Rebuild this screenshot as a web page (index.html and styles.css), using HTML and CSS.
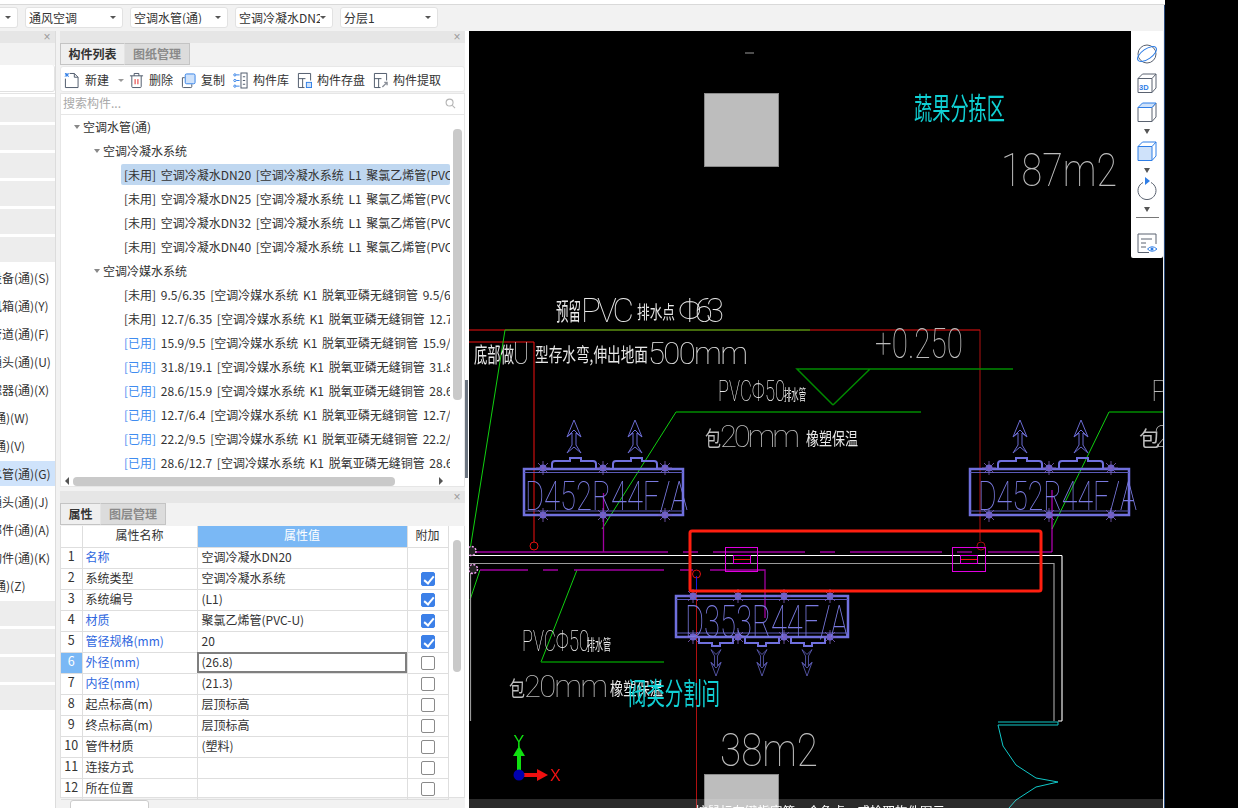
FILE: index.html
```html
<!DOCTYPE html>
<html lang="zh">
<head>
<meta charset="utf-8">
<title>构件列表</title>
<link rel="stylesheet" href="styles.css">
</head>
<body>
<div class="topline"></div>
<div class="app">
  <header class="combo-bar">
    <div class="combo combo-first"><span class="caret"></span></div>
    <div class="combo"><span class="combo-text">通风空调</span><span class="caret"></span></div>
    <div class="combo"><span class="combo-text">空调水管(通)</span><span class="caret"></span></div>
    <div class="combo"><span class="combo-text">空调冷凝水DN20</span><span class="caret"></span></div>
    <div class="combo"><span class="combo-text">分层1</span><span class="caret"></span></div>
  </header>
  <main class="work">
    <aside class="rail">
      <div class="panel-head"><span class="close">×</span></div>
      <div class="rail-blank"></div>
      <div class="rail-box"></div>
      <div class="rail-list">
        <div class="rail-row"></div><div class="rail-row"></div><div class="rail-row"></div><div class="rail-row"></div><div class="rail-row"></div><div class="rail-row"></div>
        <div class="rail-row rail-text"><span>通风设备(通)(S)</span></div>
        <div class="rail-row rail-text"><span>静压风箱(通)(Y)</span></div>
        <div class="rail-row rail-text"><span>通风管道(通)(F)</span></div>
        <div class="rail-row rail-text"><span>风管通头(通)(U)</span></div>
        <div class="rail-row rail-text"><span>水过滤器(通)(X)</span></div>
        <div class="rail-row rail-text"><span>风管(通)(W)</span></div>
        <div class="rail-row rail-text"><span>风口(通)(V)</span></div>
        <div class="rail-row rail-text rail-on"><span>空调水管(通)(G)</span></div>
        <div class="rail-row rail-text"><span>水管通头(通)(J)</span></div>
        <div class="rail-row rail-text"><span>水管部件(通)(A)</span></div>
        <div class="rail-row rail-text"><span>零星构件(通)(K)</span></div>
        <div class="rail-row rail-text"><span>土建(通)(Z)</span></div>
        <div class="rail-row"></div><div class="rail-row"></div><div class="rail-row"></div><div class="rail-row"></div>
      </div>
    </aside>
    <section class="middle">
      <div class="panel panel-list">
        <div class="panel-head"><span class="close">×</span></div>
        <div class="tabs">
          <div class="tab tab-on">构件列表</div>
          <div class="tab">图纸管理</div>
        </div>
        <div class="tools">
          <div class="tool tool-new">
            <svg class="ico" viewBox="0 0 16 18"><path class="ln" d="M1.5 7V16.5H15V5.5L11 1.5H6"/><path class="ln" d="M11 1.5V5.5H15"/><path class="bl" d="M1 1l4 4M5 1L1 5M3 1v4M1 3h4"/></svg>
            <span>新建</span><i class="mini"></i>
          </div>
          <div class="tool tool-del">
            <svg class="ico" viewBox="0 0 16 18"><path class="ln" d="M1 4H15M5.5 4V1.5H10.500V4M3 4V15.500Q3 16.500 4 16.500H12Q13 16.500 13 15.500V4"/><path class="rd" d="M6.500 7.500V13M9.500 7.500V13"/></svg>
            <span>删除</span>
          </div>
          <div class="tool tool-copy">
            <svg class="ico" viewBox="0 0 16 18"><path class="ln" d="M4 6H1.500V15.500Q1.500 16.500 2.500 16.500H10.500Q11.500 16.500 11.500 15.500V13"/><rect class="bf" x="4.500" y="2" width="10.500" height="10.500" rx="1.500"/></svg>
            <span>复制</span>
          </div>
          <div class="tool tool-lib">
            <svg class="ico" viewBox="0 0 16 18"><circle class="bl" cx="2" cy="3" r="1.200"/><circle class="bl" cx="2" cy="9" r="1.200"/><circle class="bl" cx="2" cy="15" r="1.200"/><path class="bl" d="M3.500 3H7M3.500 9H7M3.500 15H7"/><rect class="ln" x="8.500" y="1" width="6.500" height="16"/><path class="ln" d="M10.500 5H13M10.500 9H13M10.500 13H13"/></svg>
            <span>构件库</span>
          </div>
          <div class="tool tool-save">
            <svg class="ico" viewBox="0 0 16 18"><path class="ln" d="M8 16.500H1.500V1.500H14.500V9M1.500 7H9M6 7V16.500"/><rect class="bf" x="10" y="11" width="5.500" height="5.500"/></svg>
            <span>构件存盘</span>
          </div>
          <div class="tool tool-get">
            <svg class="ico" viewBox="0 0 16 18"><path class="ln" d="M8 16.500H1.500V1.500H14.500V9M1.500 7H9M6 7V16.500"/><path class="gy" d="M10 16l5-5M12 11h3v3"/></svg>
            <span>构件提取</span>
          </div>
        </div>
        <div class="search">
          <span>搜索构件...</span>
          <svg class="lens" viewBox="0 0 12 12"><circle cx="5" cy="5" r="3.800"/><path d="M8 8l3 3"/></svg>
        </div>
        <div class="tree">
          <div class="tree-body">
            <div class="node l1"><i class="fold"></i>空调水管(通)</div>
            <div class="node l2"><i class="fold"></i>空调冷凝水系统</div>
            <div class="node l3 node-on"><span class="leaf"><b>[未用]</b> 空调冷凝水DN20 [空调冷凝水系统 L1 聚氯乙烯管(PVC-U) 20]</span></div>
            <div class="node l3"><span class="leaf"><b>[未用]</b> 空调冷凝水DN25 [空调冷凝水系统 L1 聚氯乙烯管(PVC-U) 25]</span></div>
            <div class="node l3"><span class="leaf"><b>[未用]</b> 空调冷凝水DN32 [空调冷凝水系统 L1 聚氯乙烯管(PVC-U) 32]</span></div>
            <div class="node l3"><span class="leaf"><b>[未用]</b> 空调冷凝水DN40 [空调冷凝水系统 L1 聚氯乙烯管(PVC-U) 40]</span></div>
            <div class="node l2"><i class="fold"></i>空调冷媒水系统</div>
            <div class="node l3"><span class="leaf"><b>[未用]</b> 9.5/6.35 [空调冷媒水系统 K1 脱氧亚磷无缝铜管 9.5/6.35]</span></div>
            <div class="node l3"><span class="leaf"><b>[未用]</b> 12.7/6.35 [空调冷媒水系统 K1 脱氧亚磷无缝铜管 12.7/6.35]</span></div>
            <div class="node l3"><span class="leaf"><b class="used">[已用]</b> 15.9/9.5 [空调冷媒水系统 K1 脱氧亚磷无缝铜管 15.9/9.5]</span></div>
            <div class="node l3"><span class="leaf"><b class="used">[已用]</b> 31.8/19.1 [空调冷媒水系统 K1 脱氧亚磷无缝铜管 31.8/19.1]</span></div>
            <div class="node l3"><span class="leaf"><b class="used">[已用]</b> 28.6/15.9 [空调冷媒水系统 K1 脱氧亚磷无缝铜管 28.6/15.9]</span></div>
            <div class="node l3"><span class="leaf"><b class="used">[已用]</b> 12.7/6.4 [空调冷媒水系统 K1 脱氧亚磷无缝铜管 12.7/6.4]</span></div>
            <div class="node l3"><span class="leaf"><b class="used">[已用]</b> 22.2/9.5 [空调冷媒水系统 K1 脱氧亚磷无缝铜管 22.2/9.5]</span></div>
            <div class="node l3"><span class="leaf"><b class="used">[已用]</b> 28.6/12.7 [空调冷媒水系统 K1 脱氧亚磷无缝铜管 28.6/12.7]</span></div>
            <div class="vthumb"></div>
          </div>
          <div class="hscroll"><i class="arr arr-l"></i><div class="hthumb"></div><i class="arr arr-r"></i></div>
        </div>
      </div>
      <div class="panel panel-props">
        <div class="panel-head"><span class="close">×</span></div>
        <div class="tabs">
          <div class="tab tab-on tab-short">属性</div>
          <div class="tab">图层管理</div>
        </div>
        <div class="props">
          <table class="grid">
            <colgroup><col class="c-n"><col class="c-name"><col class="c-val"><col class="c-add"></colgroup>
            <thead><tr><th></th><th>属性名称</th><th class="hot">属性值</th><th>附加</th></tr></thead>
            <tbody>
              <tr><td class="n">1</td><td class="lnk">名称</td><td class="val">空调冷凝水DN20</td><td></td></tr>
              <tr><td class="n">2</td><td>系统类型</td><td class="val">空调冷凝水系统</td><td class="box"><span class="chk chk-on"></span></td></tr>
              <tr><td class="n">3</td><td>系统编号</td><td class="val">(L1)</td><td class="box"><span class="chk chk-on"></span></td></tr>
              <tr><td class="n">4</td><td class="lnk">材质</td><td class="val">聚氯乙烯管(PVC-U)</td><td class="box"><span class="chk chk-on"></span></td></tr>
              <tr><td class="n">5</td><td class="lnk">管径规格(mm)</td><td class="val">20</td><td class="box"><span class="chk chk-on"></span></td></tr>
              <tr><td class="n hot">6</td><td class="lnk">外径(mm)</td><td class="val edit">(26.8)</td><td class="box"><span class="chk"></span></td></tr>
              <tr><td class="n">7</td><td class="lnk">内径(mm)</td><td class="val">(21.3)</td><td class="box"><span class="chk"></span></td></tr>
              <tr><td class="n">8</td><td>起点标高(m)</td><td class="val">层顶标高</td><td class="box"><span class="chk"></span></td></tr>
              <tr><td class="n">9</td><td>终点标高(m)</td><td class="val">层顶标高</td><td class="box"><span class="chk"></span></td></tr>
              <tr><td class="n">10</td><td>管件材质</td><td class="val">(塑料)</td><td class="box"><span class="chk"></span></td></tr>
              <tr><td class="n">11</td><td>连接方式</td><td class="val"></td><td class="box"><span class="chk"></span></td></tr>
              <tr><td class="n">12</td><td>所在位置</td><td class="val"></td><td class="box"><span class="chk"></span></td></tr>
            </tbody>
          </table>
          <div class="props-scroll"><div class="pthumb"></div></div>
        </div>
        <div class="foot"><button class="foot-btn">显示属性</button></div>
      </div>
    </section>
    <div class="splitter"><div class="split-grip"></div></div>
    <section class="canvas">
      <svg class="cad" viewBox="469 31 694 777" width="694" height="777">
        <defs>
          <g id="spider">
            <circle class="sp-in" r="3.500"/>
            <path class="sp-ln" d="M-7 0H7M0-7V7M-5-5L5 5M-5 5L5-5"/>
          </g>
          <g id="up">
            <path class="unit-ln" d="M0 0L7 17L2 13V25L7 33L0 27L-7 33L-2 25V13L-7 17Z"/>
            <path class="unit-ln" d="M-7 17L0 10L7 17"/>
          </g>
          <path id="fan" class="unit-fan" d="M0 8V3Q0 0 3 0H18V-3H29V0H41Q44 0 44 3V8"/>
          <path id="fan3" class="unit-fan" d="M0 0V5H13V8H21V5H34V0"/>
          <g id="ac">
            <rect class="unit-box" x="0" y="0" width="159" height="46"/>
            <path class="unit-thin" d="M0 3.500H159M0 42H159"/>
            <use href="#fan" x="28" y="-8"/><use href="#fan" x="89" y="-8"/>
            <use href="#spider" x="19" y="-1"/><use href="#spider" x="79" y="-1"/><use href="#spider" x="141" y="-1"/>
            <use href="#spider" x="19" y="46"/><use href="#spider" x="79" y="46"/><use href="#spider" x="141" y="46"/>
            <use href="#up" x="50" y="-49"/><use href="#up" x="111" y="-49"/>
          </g>
        </defs>

        <rect class="block" x="704.500" y="93.500" width="74" height="73"/>
        <rect class="block" x="704.500" y="774.500" width="74" height="40"/>
        <path class="wgray" d="M745 53H754"/>

        <path class="red" d="M469 330H980M469 342H534M534 342V542"/>
        <path class="dred" d="M980 330V541M696.500 580V808"/>
        <circle class="red-c" cx="534" cy="546" r="4"/>
        <circle class="dred-c" cx="981" cy="546" r="4"/>
        <circle class="red-c" cx="696.500" cy="574" r="4"/>
        <path class="blue" d="M696.500 576V590"/>

        <path class="grn" d="M810 330H505L470 550M480 570L470 600M676 412L602 529M1109 412L1052 529M577 570L541 662"/>
        <path class="dgrn" d="M833 405L797 369H1013M833 405L870 369M676 412H921M1109 412H1163M541 662H664"/>

        <path class="pur" d="M475 552H668M683 552H698M713 552H805M820 552H835M850 552H942M480 570H528M543 570H558M574 570H664M680 570H693M710 570H765V618M603.500 493V552"/>
        <path class="magenta" d="M957 552H972M988 552H1052V490"/>
        <path class="wht" d="M469 555.500H1062V721H1058"/>
        <path class="gry" d="M469 563.500H1054V721M470.500 572V721M1062 556V720"/>
        <rect class="magenta" x="725.500" y="547.500" width="32" height="24"/>
        <rect class="magenta" x="733.500" y="555.500" width="17" height="8"/>
        <path class="red" d="M734 559.500H750"/>
        <rect class="magenta" x="952.500" y="547.500" width="33" height="24"/>
        <rect class="magenta" x="960.500" y="555.500" width="17" height="8"/>
        <path class="red" d="M961 559.500H977"/>

        <circle class="joint" cx="471.500" cy="551" r="4.500"/>
        <circle class="joint" cx="473" cy="569" r="4.500"/>

        <use href="#ac" x="524" y="469"/>
        <use href="#ac" x="970" y="469"/>

        <rect class="unit-box" x="676" y="596" width="172" height="41"/>
        <path class="unit-thin" d="M676 599.500H848M676 633H848"/>
        <use href="#fan3" x="699" y="638"/><use href="#fan3" x="745" y="638"/><use href="#fan3" x="791" y="638"/>
        <use href="#spider" x="693" y="596"/><use href="#spider" x="738" y="596"/><use href="#spider" x="784" y="596"/><use href="#spider" x="830" y="596"/>
        <use href="#spider" x="693" y="637"/><use href="#spider" x="738" y="637"/><use href="#spider" x="784" y="637"/><use href="#spider" x="830" y="637"/>
        <use href="#up" transform="translate(716 676) scale(.72 -.8)"/>
        <use href="#up" transform="translate(762 676) scale(.72 -.8)"/>
        <use href="#up" transform="translate(807 676) scale(.72 -.8)"/>

        <text class="t-cn cyan" x="914" y="119" font-size="30" textLength="91" lengthAdjust="spacingAndGlyphs">蔬果分拣区</text>
        <text class="t-la dim" x="1001" y="186" font-size="47" textLength="116" lengthAdjust="spacingAndGlyphs">187m2</text>

        <text class="t-cn white" x="556" y="320" font-size="24" textLength="25" lengthAdjust="spacingAndGlyphs">预留</text>
        <text class="t-la white" x="581" y="322" font-size="33" textLength="53" lengthAdjust="spacing">PVC</text>
        <text class="t-cn white" x="637" y="319" font-size="18" textLength="38" lengthAdjust="spacingAndGlyphs">排水点</text>
        <text class="t-la white" x="678" y="322" font-size="33" textLength="46" lengthAdjust="spacing">Φ63</text>

        <text class="t-cn white" x="474" y="362" font-size="21" textLength="40" lengthAdjust="spacingAndGlyphs">底部做</text>
        <text class="t-la white" x="513" y="364" font-size="31" textLength="16" lengthAdjust="spacingAndGlyphs">U</text>
        <text class="t-cn white" x="535" y="362" font-size="19" textLength="113" lengthAdjust="spacingAndGlyphs">型存水弯,伸出地面</text>
        <text class="t-la white" x="648" y="364" font-size="31" textLength="100" lengthAdjust="spacing">500mm</text>

        <text class="t-la white" x="718" y="401" font-size="29" textLength="67" lengthAdjust="spacingAndGlyphs">PVCΦ50</text>
        <text class="t-cn white" x="784" y="400" font-size="15" textLength="22" lengthAdjust="spacingAndGlyphs">排水管</text>
        <text class="t-cn dim" x="705" y="446" font-size="21" textLength="16" lengthAdjust="spacingAndGlyphs">包</text>
        <text class="t-la dim" x="720" y="447" font-size="31" textLength="80" lengthAdjust="spacing">20mm</text>
        <text class="t-cn white" x="806" y="445" font-size="17" textLength="52" lengthAdjust="spacingAndGlyphs">橡塑保温</text>

        <text class="t-la dim" x="875" y="358" font-size="43" textLength="88" lengthAdjust="spacingAndGlyphs">+0.250</text>

        <text class="t-la dim" x="1151" y="401" font-size="29">P</text>
        <text class="t-cn dim" x="1139" y="446" font-size="21">包</text>
        <text class="t-la dim" x="1154" y="447" font-size="31">2</text>

        <text class="t-la unit-t" x="525" y="510" font-size="41" textLength="163" lengthAdjust="spacingAndGlyphs">D452R44F/A</text>
        <text class="t-la unit-t" x="978" y="510" font-size="41" textLength="159" lengthAdjust="spacingAndGlyphs">D452R44F/A</text>
        <text class="t-la unit-t" x="685" y="637" font-size="44" textLength="163" lengthAdjust="spacingAndGlyphs">D353R44F/A</text>

        <text class="t-la white" x="522" y="651" font-size="29" textLength="67" lengthAdjust="spacingAndGlyphs">PVCΦ50</text>
        <text class="t-cn white" x="587" y="650" font-size="15" textLength="24" lengthAdjust="spacingAndGlyphs">排水管</text>
        <text class="t-cn dim" x="509" y="696" font-size="21" textLength="16" lengthAdjust="spacingAndGlyphs">包</text>
        <text class="t-la dim" x="524" y="697" font-size="31" textLength="84" lengthAdjust="spacing">20mm</text>
        <text class="t-cn white" x="610" y="695" font-size="17" textLength="53" lengthAdjust="spacingAndGlyphs">橡塑保温</text>
        <text class="t-cn cyan" x="628" y="704" font-size="30" textLength="92" lengthAdjust="spacingAndGlyphs">阀类分割间</text>
        <text class="t-la dim" x="720" y="766" font-size="47" textLength="98" lengthAdjust="spacingAndGlyphs">38m2</text>

        <path class="cy" d="M1058 725H998L1003 746L1016 765L1036 778L1058 782L1036 787L1016 800L1009 808"/>
        <path class="cy" d="M998 722H1058V725"/>

        <rect class="hilite" x="690" y="531" width="351" height="60" rx="2"/>

        <path class="ax-g" d="M519 775V752"/>
        <path class="ax-gf" d="M519 746L525 756H513Z"/>
        <text class="axis-g" x="513.500" y="747" font-size="16">Y</text>
        <path class="ax-r" d="M519 775H540"/>
        <path class="ax-rf" d="M548 775L537 769V781Z"/>
        <text class="axis-r" x="550" y="781" font-size="16">X</text>
        <circle class="ax-o" cx="519" cy="775" r="5.500"/>
      </svg>
      <div class="status"><span>按鼠标左键指定第一个角点，或拾取构件图元</span></div>
      <nav class="view-bar">
        <svg class="vb" viewBox="0 0 22 22"><circle class="vg" cx="11" cy="11" r="9"/><ellipse class="vb-l" cx="11" cy="11" rx="11" ry="5" transform="rotate(-35 11 11)"/></svg>
        <svg class="vb vb-gap" viewBox="0 0 22 22"><path class="vg" d="M2 6.500L6.500 2H20V16L16 20.500H2ZM2 6.500H16V20.500M16 6.500L20 2"/><text class="v3d" x="3" y="17.500" font-size="7.500">3D</text></svg>
        <svg class="vb vb-gap" viewBox="0 0 22 22"><path class="vg" d="M2 6.500H16V20.500H2ZM16 6.500L20 2V16L16 20.500"/><path class="vb-f" d="M2 6.500L6.500 2H20L16 6.500Z"/></svg>
        <i class="vtri"></i>
        <svg class="vb vb-near" viewBox="0 0 22 22"><path class="vb-ff" d="M2 6.500H16V20.500H2Z"/><path class="vb-l" d="M2 6.500L6.500 2H20V16L16 20.500M16 6.500L20 2M2 6.500H16V20.500H2Z"/></svg>
        <i class="vtri"></i>
        <svg class="vb vb-near" viewBox="0 0 22 22"><path class="vg" d="M7 3.500A9 9 0 1 0 15 3.500"/><path class="vb-a" d="M9 -2L14 2L9 6Z"/></svg>
        <i class="vtri"></i>
        <hr class="vline">
        <svg class="vb vb-doc" viewBox="0 0 22 22"><path class="vg" d="M13 20.500H2V2H20V12M5 7H16M5 11H10M5 15H10"/><path class="vb-l" d="M11.500 17Q16 12.500 21 17Q16 21.500 11.500 17Z"/><circle class="vb-ff2" cx="16" cy="17" r="1.500"/></svg>
      </nav>
    </section>
  </main>
</div>
</body>
</html>
```
FILE: styles.css
```css
* { box-sizing: border-box; }
html, body { margin: 0; height: 100%; }
body {
  width: 1238px;
  height: 808px;
  overflow: hidden;
  background: #000;
  font: 12px/1 "Noto Sans CJK SC", "Liberation Sans", sans-serif;
  color: #333;
}
.topline { width: 1165px; height: 5px; background: #fff; border-bottom: 1px solid #d9d9d9; }
.app { width: 1165px; height: 803px; background: #f2f2f2; display: flex; flex-direction: column; border-right: 1px solid #2a4a7a; }

.combo-bar { height: 26px; display: flex; gap: 7px; padding: 2px 0 0 0; flex: none; }
.combo {
  width: 98px; height: 21px; background: #fff; border: 1px solid #e2e2e2; border-radius: 3px;
  display: flex; align-items: center; justify-content: space-between; padding: 0 6px 0 3px; font-size: 12px; overflow: hidden;
}
.combo-first { width: 18px; margin-left: 0; border-left: 0; border-radius: 0 3px 3px 0; justify-content: flex-end; }
.combo-text { white-space: nowrap; overflow: hidden; width: 82px; }
.caret { flex: none; width: 0; height: 0; border: 3px solid transparent; border-top: 3px solid #555; border-bottom: 0; }

.work { flex: 1; display: flex; min-height: 0; }

.panel-head { height: 12px; background: #e6e6e6; flex: none; display: flex; justify-content: flex-end; align-items: center; padding-right: 3px; }
.close { color: #9a9a9a; font: 12px/12px "Liberation Sans", sans-serif; width: 10px; text-align: center; }

.rail { width: 56px; flex: none; background: #fff; border-right: 1px solid #dcdcdc; display: flex; flex-direction: column; overflow: hidden; }
.rail-blank { height: 22px; background: #f2f2f2; flex: none; }
.rail-box { height: 27px; background: #fff; border-right: 1px solid #e4e4e4; border-bottom: 1px solid #e0e0e0; border-radius: 0 3px 3px 0; flex: none; }
.rail-list { padding-top: 3px; display: flex; flex-direction: column; gap: 3px; border-top: 1px solid #e4e4e4; margin-top: 1px; }
.rail-row { height: 25px; background: #ededed; flex: none; overflow: hidden; }
.rail-text { background: #fff; display: flex; align-items: center; font-size: 12px; white-space: nowrap; }
.rail-text span { margin-left: -34px; }
.rail-on { background: #cfe3fb; }

.middle { width: 405px; margin-left: 4px; flex: none; display: flex; flex-direction: column; gap: 4px; }
.panel { display: flex; flex-direction: column; }
.panel-list { height: 456px; }
.panel-props { flex: 1; min-height: 0; overflow: hidden; }

.tabs { height: 23px; display: flex; flex: none; background: #f2f2f2; border-bottom: 0; }
.tab { width: 65px; height: 22px; background: #dcdcdc; color: #8a8a8a; border: 1px solid #c4c4c4; font-weight: 700; text-align: center; line-height: 20px; font-size: 12px; border-left: 0; }
.tab-on { background: #efefef; color: #333; border-left: 1px solid #c4c4c4; border-right: 1px solid #e4e4e4; }
.tab-short { width: 41px; }

.tools { height: 26px; background: #fff; border-radius: 3px; display: flex; align-items: center; padding: 2px 0 0 3px; flex: none; border: 1px solid #e8e8e8; }
.tool { display: flex; align-items: center; gap: 5px; font-size: 12px; }
.tool-new { gap: 6px; }
.ico { width: 15px; height: 17px; flex: none; }
.ln, .bl, .rd, .gy { fill: none; stroke-width: 1; }
.ln { stroke: #4a5566; }
.bl { stroke: #2f7ee6; }
.rd { stroke: #e02020; }
.gy { stroke: #8a8f98; stroke-width: 1.500; }
.bf { fill: #cfe2fa; stroke: #2f7ee6; stroke-width: 1; }
.mini { width: 0; height: 0; border: 3px solid transparent; border-top: 3px solid #999; border-bottom: 0; margin: 0 5px 0 3px; }
.tool-del { margin-right: 8px; }
.tool-copy { margin-right: 8px; }
.tool-lib { margin-right: 8px; }
.tool-save { margin-right: 8px; }

.search { height: 21px; background: #fff; border: 1px solid #e6e6e6; border-bottom: 0; margin-top: 1px; display: flex; align-items: center; justify-content: space-between; padding: 0 8px 2px 2px; color: #a9a9a9; flex: none; }
.lens { width: 11px; height: 11px; fill: none; stroke: #b4b4b4; stroke-width: 1.200; }

.tree { flex: 1; background: #fff; border: 1px solid #e6e6e6; display: flex; flex-direction: column; min-height: 0; }
.tree-body { position: relative; height: 360px; overflow: hidden; flex: none; }
.node { height: 24px; display: flex; align-items: center; white-space: nowrap; width: 389px; overflow: hidden; }
.l1 { padding-left: 13px; }
.l2 { padding-left: 33px; }
.l3 { padding-left: 60px; }
.fold { width: 0; height: 0; border: 3.500px solid transparent; border-top: 4px solid #888; border-bottom: 0; margin-right: 3px; flex: none; }
.leaf { display: block; height: 21px; line-height: 21px; padding-left: 3px; flex: 1; overflow: hidden; margin-top: -2px; word-spacing: 2px; }
.leaf b { font-weight: 400; }
.leaf .used { color: #3f8cf0; }
.node-on .leaf { background: #bfd7f0; border-radius: 2px; }
.vthumb { position: absolute; right: 2px; top: 14px; width: 9px; height: 271px; background: #c9c9c9; border-radius: 4px; }
.hscroll { height: 12px; display: flex; align-items: center; padding: 0 14px 0 4px; flex: none; }
.hthumb { width: 322px; height: 9px; background: #c9c9c9; border-radius: 4px; margin: 0 44px 0 4px; }
.arr { width: 0; height: 0; border: 4px solid transparent; }
.arr-l { border-right: 4px solid #555; border-left: 0; }
.arr-r { border-left: 4px solid #555; border-right: 0; }

.props { height: 272px; display: flex; background: #fff; border: 1px solid #e0e0e0; border-top: 0; flex: none; }
.grid { border-collapse: collapse; table-layout: fixed; width: 387px; flex: none; }
.c-n { width: 21px; }
.c-name { width: 115px; }
.c-val { width: 210px; }
.c-add { width: 41px; }
.grid th, .grid td { height: 21px; padding: 0 3px 2px; border: 1px solid #dedede; border-top: 0; font-weight: 400; white-space: nowrap; overflow: hidden; font-size: 12px; }
.grid th { text-align: center; }
.grid td.val { padding-left: 4px; }
.grid td.n { text-align: center; padding: 0 0 2px; font-size: 12.500px; }
.grid tr > :first-child { border-left: 0; }
.grid .hot { background: #7ab8f5; color: #fff; }
.lnk { color: #2f68e0; }
.grid td.edit { outline: 2px solid #7f7f7f; outline-offset: -2px; }
.grid td.box { text-align: center; padding: 0; }
.chk { display: inline-block; width: 14px; height: 14px; border: 1px solid #8a8a8a; border-radius: 2px; vertical-align: middle; position: relative; }
.chk-on { background: #3c80e8; border-color: #3c80e8; }
.chk-on::after { content: ""; position: absolute; left: 4px; top: 1px; width: 4px; height: 8px; border: solid #fff; border-width: 0 2px 2px 0; transform: rotate(40deg); }
.props-scroll { flex: 1; padding: 14px 0 0 4px; }
.pthumb { width: 8px; height: 132px; background: #c9c9c9; border-radius: 4px; }
.foot { padding: 2px 0 0 10px; }
.foot-btn { width: 79px; height: 27px; background: #fff; border: 1px solid #ccc; border-radius: 3px; font: inherit; color: #333; padding: 0; }

.splitter { width: 4px; flex: none; background: #fff; }
.split-grip { margin-top: 349px; height: 98px; width: 3px; background: #6b7480; }

.canvas { position: relative; flex: 1; background: #000; overflow: hidden; border-right: 1px solid #eef0f2; }
.cad { display: block; transform: translateZ(0); }
.block { fill: #bdbdbd; stroke: #8a8a8a; stroke-width: 1; }
.wgray { stroke: #9a9a9a; fill: none; }
.red, .dred, .grn, .dgrn, .pur, .magenta, .wht, .gry, .blue, .cy, .hilite, .red-c, .dred-c { fill: none; }
.red { stroke: #f01010; }
.dred { stroke: #b01010; }
.red-c { stroke: #e01010; }
.dred-c { stroke: #a01010; }
.blue { stroke: #1818e0; }
.grn { stroke: #10d010; }
.dgrn { stroke: #008a00; stroke-width: 1.500; }
.pur { stroke: #a000a0; stroke-width: 1.300; }
.magenta { stroke: #e000e0; }
.wht { stroke: #fff; }
.gry { stroke: #9a9a9a; stroke-width: 1.200; }
.cy { stroke: #10c8c8; }
.joint { fill: #222; stroke: #f0a0f0; stroke-width: 1.500; stroke-dasharray: 2 1.500; }
.hilite { stroke: #ff1f10; stroke-width: 3; }
.unit-box { fill: none; stroke: #7070dd; stroke-width: 2.500; }
.unit-thin { fill: none; stroke: #5a5ab8; stroke-width: 1; }
.unit-ln { fill: none; stroke: #6a6ad0; stroke-width: 1; }
.unit-fan { fill: none; stroke: #7070dd; stroke-width: 2; }
.sp-in { fill: #6060c8; }
.sp-ln { stroke: #8060c0; stroke-width: .8; fill: none; }
.t-la { font-family: Roboto, "Liberation Sans", sans-serif; font-weight: 100; }
.t-cn { font-family: "Noto Sans CJK SC", sans-serif; font-weight: 400; }
.white { fill: #e8e8e8; }
.dim { fill: #bcbcbc; }
.cyan { fill: #10d0d4; }
.unit-t { fill: #7a7ae0; }
.ax-g { stroke: #10e010; stroke-width: 4; fill: none; }
.ax-gf { fill: #10e010; }
.ax-r { stroke: #f01010; stroke-width: 4; fill: none; }
.ax-rf { fill: #f01010; }
.ax-o { fill: #0000b0; }
.axis-g { fill: #10e010; font-family: "Liberation Sans", sans-serif; }
.axis-r { fill: #f01010; font-family: "Liberation Sans", sans-serif; }

.status { position: absolute; left: 0; right: 0; bottom: 0; height: 9px; background: rgba(240, 240, 240, .18); color: #fff; text-align: center; font-size: 12.500px; line-height: 24px; overflow: hidden; padding-left: 8px; }

.view-bar { position: absolute; right: 0; top: 0; width: 32px; height: 227px; background: #fff; border-radius: 0 0 2px 2px; display: flex; flex-direction: column; align-items: center; padding-top: 12px; }
.vb { width: 22px; height: 22px; flex: none; overflow: visible; }
.vg { fill: none; stroke: #5a6270; stroke-width: 1; }
.vb-l { fill: none; stroke: #2f7ee6; stroke-width: 1; }
.vb-f { fill: #cfe2fa; stroke: #2f7ee6; stroke-width: 1; }
.vb-ff { fill: #cfe2fa; }
.vb-ff2 { fill: #2f7ee6; }
.vb-a { fill: #2f7ee6; }
.v3d { fill: #2f7ee6; font-family: "Liberation Sans", sans-serif; font-weight: 700; }
.vb-gap { margin-top: 7px; }
.vb-near { margin-top: 6px; }
.vb-doc { margin-top: 14px; }
.vtri { flex: none; width: 0; height: 0; margin-top: 6px; border: 3.500px solid transparent; border-top: 5px solid #555; border-bottom: 0; }
.vline { width: 23px; height: 1px; margin: 5px 0 0; border: 0; background: #777; flex: none; }
```
